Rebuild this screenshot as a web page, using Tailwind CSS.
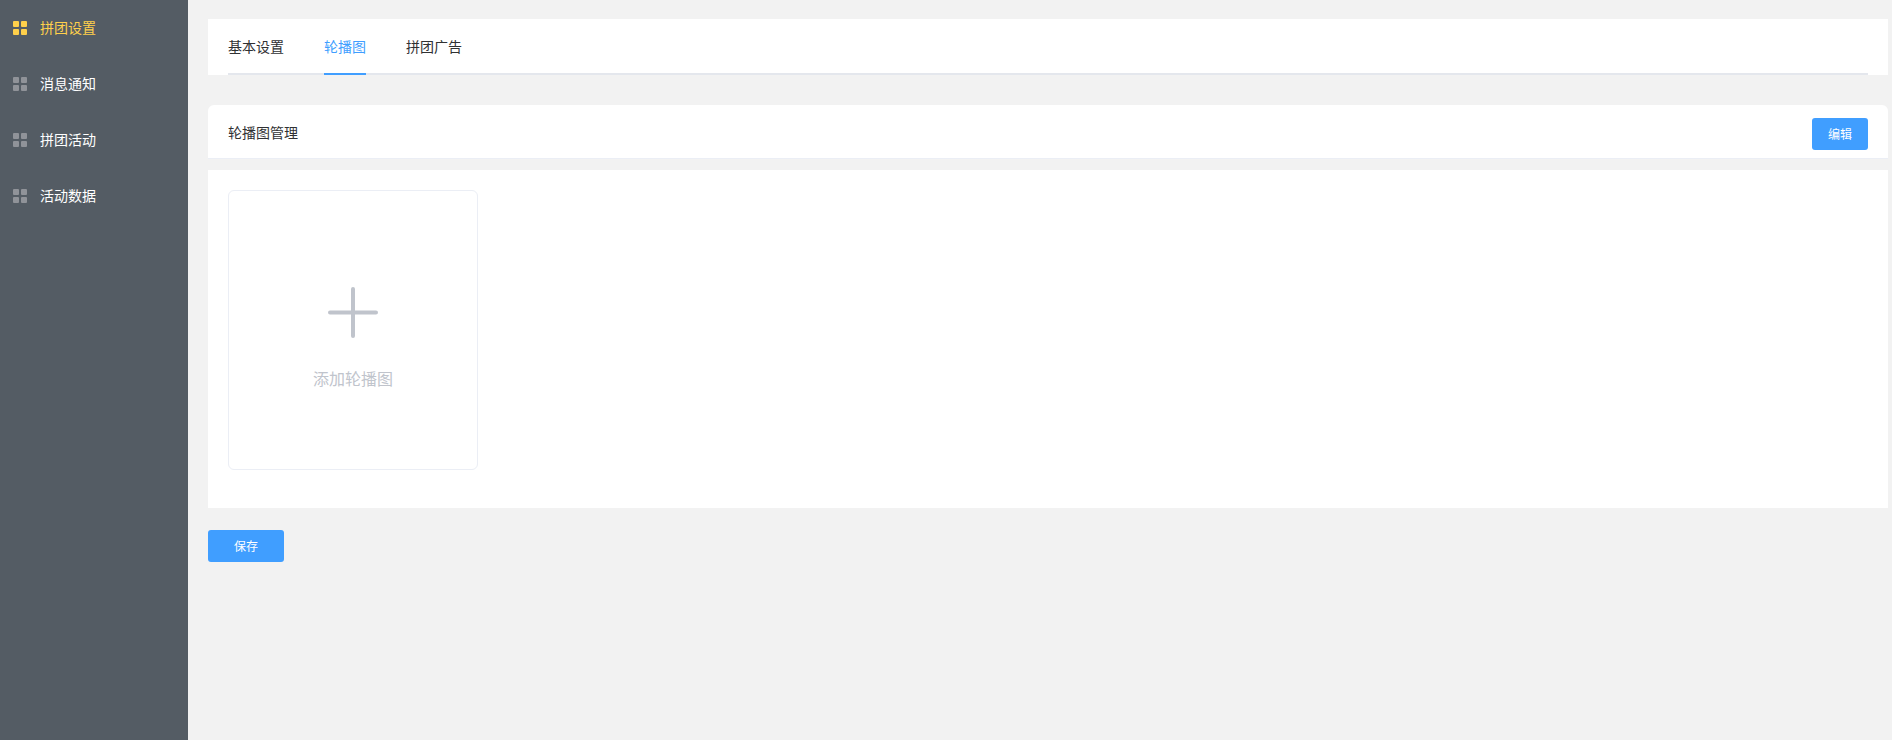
<!DOCTYPE html>
<html lang="zh-CN">
<head>
    <meta charset="UTF-8">
    <meta name="viewport" content="width=device-width, initial-scale=1.0">
    <title>拼团设置</title>
    <script src="https://cdn.jsdelivr.net/npm/@tailwindcss/browser@4"></script>
</head>
<body class="h-[740px] overflow-hidden bg-[#f2f2f2] font-['Liberation_Sans','Noto_Sans_CJK_SC',sans-serif] text-sm text-[#303133]">
    <div class="flex h-full">
        <!-- Sidebar -->
        <aside class="w-[188px] shrink-0 bg-[#545c64] text-white">
            <a class="flex h-14 items-center gap-[13px] pl-[13px] text-[#ffd04b]">
                <span class="grid h-3.5 w-3.5 grid-cols-2 gap-0.5">
                    <i class="rounded-[1px] bg-[#ffd04b]"></i><i class="rounded-[1px] bg-[#ffd04b]"></i><i class="rounded-[1px] bg-[#ffd04b]"></i><i class="rounded-[1px] bg-[#ffd04b]"></i>
                </span>
                拼团设置
            </a>
            <a class="flex h-14 items-center gap-[13px] pl-[13px]">
                <span class="grid h-3.5 w-3.5 grid-cols-2 gap-0.5">
                    <i class="rounded-[1px] bg-[#909399]"></i><i class="rounded-[1px] bg-[#909399]"></i><i class="rounded-[1px] bg-[#909399]"></i><i class="rounded-[1px] bg-[#909399]"></i>
                </span>
                消息通知
            </a>
            <a class="flex h-14 items-center gap-[13px] pl-[13px]">
                <span class="grid h-3.5 w-3.5 grid-cols-2 gap-0.5">
                    <i class="rounded-[1px] bg-[#909399]"></i><i class="rounded-[1px] bg-[#909399]"></i><i class="rounded-[1px] bg-[#909399]"></i><i class="rounded-[1px] bg-[#909399]"></i>
                </span>
                拼团活动
            </a>
            <a class="flex h-14 items-center gap-[13px] pl-[13px]">
                <span class="grid h-3.5 w-3.5 grid-cols-2 gap-0.5">
                    <i class="rounded-[1px] bg-[#909399]"></i><i class="rounded-[1px] bg-[#909399]"></i><i class="rounded-[1px] bg-[#909399]"></i><i class="rounded-[1px] bg-[#909399]"></i>
                </span>
                活动数据
            </a>
        </aside>

        <!-- Main -->
        <main class="flex-1 pl-5 pr-1 pt-[19px]">
            <!-- Tabs -->
            <div class="h-14 bg-white px-5">
                <div class="flex h-full gap-10 border-b-2 border-[#e4e7ed]">
                    <a class="flex items-center pt-0.5">基本设置</a>
                    <a class="-mb-0.5 flex items-center border-b-2 border-[#409eff] pt-0.5 text-[#409eff]">轮播图</a>
                    <a class="flex items-center pt-0.5">拼团广告</a>
                </div>
            </div>

            <!-- Header -->
            <div class="mt-[30px] flex h-[54px] items-center justify-between rounded-t-md border-b border-[#ebeef5] bg-white px-5 pt-[5px]">
                <span class="-mt-0.5">轮播图管理</span>
                <button class="h-8 w-14 rounded-[3px] bg-[#409eff] pt-px text-xs text-white">编辑</button>
            </div>

            <!-- Banner list -->
            <div class="mt-[11px] h-[338px] bg-white px-5 pt-5">
                <div class="flex h-[280px] w-[250px] flex-col items-center rounded-md border border-[#ebeef5] pt-[96px]">
                    <svg class="h-[51px] w-[50px]" viewBox="0 0 50 51" fill="none" stroke="#c0c4cc" stroke-width="4" stroke-linecap="round">
                        <path d="M25 2v47M2 25.5h46" />
                    </svg>
                    <span class="mt-[30px] text-base text-[#c0c4cc]">添加轮播图</span>
                </div>
            </div>

            <button class="mt-[22px] h-8 w-[76px] rounded-[3px] bg-[#409eff] pt-px text-xs text-white">保存</button>
        </main>
    </div>
</body>
</html>
